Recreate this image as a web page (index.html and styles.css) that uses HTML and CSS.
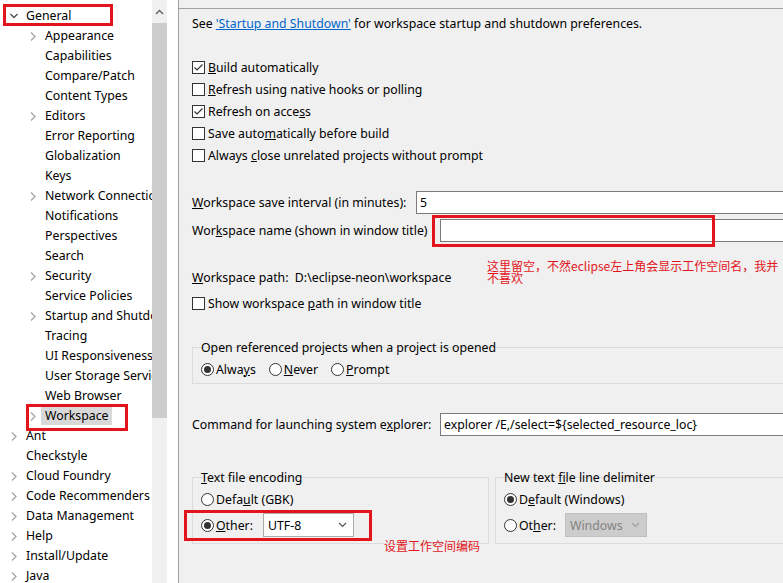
FILE: index.html
```html
<!DOCTYPE html>
<html lang="en">
<head>
    <meta charset="UTF-8">
    <title>Preferences - Workspace</title>
    <link rel="stylesheet" href="styles.css">
</head>
<body>
    <div class="window">
        <aside class="nav">
            <div class="tree">
                <div class="row lv0"><span class="tw open"><svg width="8" height="6" viewBox="0 0 8 6"><polyline points="0.5,1 4,4.5 7.5,1"/></svg></span><span class="lbl">General</span></div>
                <div class="row lv1"><span class="tw"><svg width="6" height="9" viewBox="0 0 6 9"><polyline points="1,0.5 5,4.5 1,8.5"/></svg></span><span class="lbl">Appearance</span></div>
                <div class="row lv1"><span class="tw"></span><span class="lbl">Capabilities</span></div>
                <div class="row lv1"><span class="tw"></span><span class="lbl">Compare/Patch</span></div>
                <div class="row lv1"><span class="tw"></span><span class="lbl">Content Types</span></div>
                <div class="row lv1"><span class="tw"><svg width="6" height="9" viewBox="0 0 6 9"><polyline points="1,0.5 5,4.5 1,8.5"/></svg></span><span class="lbl">Editors</span></div>
                <div class="row lv1"><span class="tw"></span><span class="lbl">Error Reporting</span></div>
                <div class="row lv1"><span class="tw"></span><span class="lbl">Globalization</span></div>
                <div class="row lv1"><span class="tw"></span><span class="lbl">Keys</span></div>
                <div class="row lv1"><span class="tw"><svg width="6" height="9" viewBox="0 0 6 9"><polyline points="1,0.5 5,4.5 1,8.5"/></svg></span><span class="lbl">Network Connections</span></div>
                <div class="row lv1"><span class="tw"></span><span class="lbl">Notifications</span></div>
                <div class="row lv1"><span class="tw"></span><span class="lbl">Perspectives</span></div>
                <div class="row lv1"><span class="tw"></span><span class="lbl">Search</span></div>
                <div class="row lv1"><span class="tw"><svg width="6" height="9" viewBox="0 0 6 9"><polyline points="1,0.5 5,4.5 1,8.5"/></svg></span><span class="lbl">Security</span></div>
                <div class="row lv1"><span class="tw"></span><span class="lbl">Service Policies</span></div>
                <div class="row lv1"><span class="tw"><svg width="6" height="9" viewBox="0 0 6 9"><polyline points="1,0.5 5,4.5 1,8.5"/></svg></span><span class="lbl">Startup and Shutdown</span></div>
                <div class="row lv1"><span class="tw"></span><span class="lbl">Tracing</span></div>
                <div class="row lv1"><span class="tw"></span><span class="lbl">UI Responsiveness Monitoring</span></div>
                <div class="row lv1"><span class="tw"></span><span class="lbl">User Storage Service</span></div>
                <div class="row lv1"><span class="tw"></span><span class="lbl">Web Browser</span></div>
                <div class="row lv1"><span class="tw"><svg width="6" height="9" viewBox="0 0 6 9"><polyline points="1,0.5 5,4.5 1,8.5"/></svg></span><span class="lbl selected">Workspace</span></div>
                <div class="row lv0"><span class="tw"><svg width="6" height="9" viewBox="0 0 6 9"><polyline points="1,0.5 5,4.5 1,8.5"/></svg></span><span class="lbl">Ant</span></div>
                <div class="row lv0"><span class="tw"></span><span class="lbl">Checkstyle</span></div>
                <div class="row lv0"><span class="tw"><svg width="6" height="9" viewBox="0 0 6 9"><polyline points="1,0.5 5,4.5 1,8.5"/></svg></span><span class="lbl">Cloud Foundry</span></div>
                <div class="row lv0"><span class="tw"><svg width="6" height="9" viewBox="0 0 6 9"><polyline points="1,0.5 5,4.5 1,8.5"/></svg></span><span class="lbl">Code Recommenders</span></div>
                <div class="row lv0"><span class="tw"><svg width="6" height="9" viewBox="0 0 6 9"><polyline points="1,0.5 5,4.5 1,8.5"/></svg></span><span class="lbl">Data Management</span></div>
                <div class="row lv0"><span class="tw"><svg width="6" height="9" viewBox="0 0 6 9"><polyline points="1,0.5 5,4.5 1,8.5"/></svg></span><span class="lbl">Help</span></div>
                <div class="row lv0"><span class="tw"><svg width="6" height="9" viewBox="0 0 6 9"><polyline points="1,0.5 5,4.5 1,8.5"/></svg></span><span class="lbl">Install/Update</span></div>
                <div class="row lv0"><span class="tw"><svg width="6" height="9" viewBox="0 0 6 9"><polyline points="1,0.5 5,4.5 1,8.5"/></svg></span><span class="lbl">Java</span></div>
            </div>
            <div class="vscroll">
                <div class="arrow"><svg width="9" height="6" viewBox="0 0 9 6"><polyline points="1,5 4.5,1.5 8,5"/></svg></div>
                <div class="thumb"></div>
            </div>
        </aside>

        <main class="page">
            <div class="page-top"></div>
            <p class="intro">See <a href="#">'Startup and Shutdown'</a> for workspace startup and shutdown preferences.</p>

            <div class="checks">
                <label class="check"><span class="box"><svg width="11" height="11" viewBox="0 0 11 11"><polyline points="1.5,5.5 4,8 9.5,2.5"/></svg></span><span><u>B</u>uild automatically</span></label>
                <label class="check"><span class="box"></span><span><u>R</u>efresh using native hooks or polling</span></label>
                <label class="check"><span class="box"><svg width="11" height="11" viewBox="0 0 11 11"><polyline points="1.5,5.5 4,8 9.5,2.5"/></svg></span><span>Refresh on acce<u>s</u>s</span></label>
                <label class="check"><span class="box"></span><span>Save auto<u>m</u>atically before build</span></label>
                <label class="check"><span class="box"></span><span>Always <u>c</u>lose unrelated projects without prompt</span></label>
            </div>

            <div class="field save">
                <span class="flabel"><u>W</u>orkspace save interval (in minutes):</span>
                <span class="input">5</span>
            </div>
            <div class="field name">
                <span class="flabel">Wor<u>k</u>space name (shown in window title)</span>
                <span class="input"></span>
            </div>

            <div class="path"><u>W</u>orkspace path:&nbsp; D:\eclipse-neon\workspace</div>
            <label class="check show-path"><span class="box"></span><span>Show workspace <u>p</u>ath in window title</span></label>

            <div class="group open-refs">
                <div class="glabel">Open referenced projects when a project is opened</div>
                <div class="radios">
                    <label class="radio"><span class="dot on"></span><span>Alwa<u>y</u>s</span></label>
                    <label class="radio"><span class="dot"></span><span><u>N</u>ever</span></label>
                    <label class="radio"><span class="dot"></span><span><u>P</u>rompt</span></label>
                </div>
            </div>

            <div class="field command">
                <span class="flabel">Command for launching system e<u>x</u>plorer:</span>
                <span class="input">explorer /E,/select=${selected_resource_loc}</span>
            </div>

            <div class="groups">
                <div class="group encoding">
                    <div class="glabel"><u>T</u>ext file encoding</div>
                    <label class="radio line"><span class="dot"></span><span>Defa<u>u</u>lt (GBK)</span></label>
                    <div class="radio line">
                        <span class="dot on"></span><span class="other"><u>O</u>ther:</span>
                        <span class="select">UTF-8<svg width="9" height="6" viewBox="0 0 9 6"><polyline points="1,1 4.5,4.5 8,1"/></svg></span>
                    </div>
                </div>
                <div class="group delimiter">
                    <div class="glabel">New text <u>f</u>ile line delimiter</div>
                    <label class="radio line"><span class="dot on"></span><span>D<u>e</u>fault (Windows)</span></label>
                    <div class="radio line">
                        <span class="dot"></span><span class="other">Ot<u>h</u>er:</span>
                        <span class="select disabled">Windows<svg width="9" height="6" viewBox="0 0 9 6"><polyline points="1,1 4.5,4.5 8,1"/></svg></span>
                    </div>
                </div>
            </div>
        </main>

        <div class="mark mark-general"></div>
        <div class="mark mark-workspace"></div>
        <div class="mark mark-name"></div>
        <div class="mark mark-other"></div>
        <div class="note note-name">这里留空，不然eclipse左上角会显示工作空间名，我并不喜欢</div>
        <div class="note note-encoding">设置工作空间编码</div>
    </div>
</body>
</html>
```

FILE: styles.css
```css
body {
    margin: 0;
    background: #f0f0f0;
    font-family: "Noto Sans", sans-serif;
    font-size: 12.3px;
    color: #000;
}
u {
    text-decoration: underline;
    text-underline-offset: 1px;
}
.window {
    position: relative;
    display: flex;
    height: 583px;
    overflow: hidden;
}

/* left tree */
.nav {
    flex: none;
    display: flex;
    width: 178px;
    background: #fff;
    border-right: 1px solid #a0a0a0;
}
.tree {
    width: 152px;
    padding-top: 6px;
    overflow: hidden;
}
.row {
    display: flex;
    align-items: center;
    height: 20px;
    white-space: nowrap;
}
.row.lv0 {
    padding-left: 8px;
}
.row.lv1 {
    padding-left: 27px;
}
.tw {
    flex: none;
    display: flex;
    align-items: center;
    width: 15px;
    height: 20px;
    padding-left: 3px;
}
.tw svg {
    fill: none;
    stroke: #a6a6a6;
    stroke-width: 1.3;
}
.tw.open {
    padding-left: 2px;
    width: 16px;
}
.tw.open svg {
    stroke: #4d4d4d;
}
.lbl {
    line-height: 20px;
}
.lbl.selected {
    background: #d9d9d9;
    margin-left: -4px;
    padding: 0 4px;
    line-height: 18px;
}
.vscroll {
    width: 15px;
    background: #f0f0f0;
}
.vscroll .arrow {
    display: flex;
    align-items: center;
    justify-content: center;
    height: 23px;
}
.vscroll .arrow svg {
    fill: none;
    stroke: #606060;
    stroke-width: 1.4;
}
.vscroll .thumb {
    height: 395px;
    background: #cdcdcd;
}

/* right page */
.page {
    flex: 1;
    padding-left: 13px;
    overflow: hidden;
}
.page-top {
    height: 8px;
    margin-left: -13px;
    border-bottom: 1px solid #a0a0a0;
}
.intro {
    margin: 5px 0 0;
    line-height: 20px;
    white-space: nowrap;
}
.intro a {
    color: #0066cc;
    text-decoration: underline;
}
.checks {
    margin-top: 22px;
}
.check {
    display: flex;
    align-items: center;
    height: 22px;
    white-space: nowrap;
}
.box {
    flex: none;
    display: flex;
    align-items: center;
    justify-content: center;
    box-sizing: border-box;
    width: 13px;
    height: 13px;
    margin-right: 3px;
    border: 1px solid #333;
    background: #fff;
}
.box svg {
    fill: none;
    stroke: #333;
    stroke-width: 1.2;
}
.field {
    display: flex;
    align-items: center;
    height: 23px;
    white-space: nowrap;
}
.field .flabel {
    flex: none;
}
.field.save {
    margin-top: 25px;
}
.field.save .flabel {
    width: 224px;
}
.field.name {
    margin-top: 5px;
}
.field.name .flabel,
.field.command .flabel {
    width: 248px;
}
.input {
    flex: 1;
    box-sizing: border-box;
    height: 23px;
    margin-right: -20px;
    padding: 0 3px;
    line-height: 21px;
    background: #fff;
    border: 1px solid #7a7a7a;
}
.path {
    margin-top: 25px;
    line-height: 22px;
    white-space: nowrap;
}
.show-path {
    margin-top: 3px;
}
.group {
    box-sizing: border-box;
    border: 1px solid #dcdcdc;
    padding: 0 8px;
}
.glabel {
    height: 20px;
    margin-top: -10px;
    line-height: 20px;
    white-space: nowrap;
}
.open-refs {
    margin-top: 33px;
    margin-right: -20px;
    padding-bottom: 3px;
}
.radios {
    display: flex;
    gap: 13px;
}
.radio {
    display: flex;
    align-items: center;
    height: 22px;
    white-space: nowrap;
}
.dot {
    flex: none;
    box-sizing: border-box;
    display: flex;
    align-items: center;
    justify-content: center;
    width: 13px;
    height: 13px;
    margin-right: 2px;
    border: 1px solid #333;
    border-radius: 50%;
    background: #fff;
}
.dot.on::after {
    content: "";
    width: 7px;
    height: 7px;
    border-radius: 50%;
    background: #333;
}
.field.command {
    margin-top: 29px;
}
.groups {
    display: flex;
    gap: 6px;
    margin-top: 41px;
}
.group.encoding {
    width: 297px;
    padding-bottom: 6px;
}
.group.delimiter {
    flex: 1;
    margin-right: -20px;
    padding-bottom: 6px;
}
.radio.line + .radio.line {
    height: 24px;
    margin-top: 3px;
}
.other {
    width: 47px;
}
.select {
    display: flex;
    align-items: center;
    justify-content: space-between;
    box-sizing: border-box;
    width: 91px;
    height: 24px;
    padding: 0 6px 0 4px;
    background: #fff;
    border: 1px solid #adadad;
}
.select svg {
    fill: none;
    stroke: #555;
    stroke-width: 1.2;
}
.select.disabled {
    width: 82px;
    margin-left: -1px;
    background: #cccccc;
    border-color: #bfbfbf;
    color: #838383;
}
.select.disabled svg {
    stroke: #a0a0a0;
}

/* annotations drawn on top of the screenshot */
.mark {
    position: absolute;
    box-sizing: border-box;
    border: 3px solid #e3141b;
}
.mark-general {
    left: 3px;
    top: 4px;
    width: 110px;
    height: 22px;
}
.mark-workspace {
    left: 26px;
    top: 404px;
    width: 102px;
    height: 27px;
}
.mark-name {
    left: 432px;
    top: 215px;
    width: 283px;
    height: 32px;
}
.mark-other {
    left: 184px;
    top: 510px;
    width: 188px;
    height: 31px;
}
.note {
    position: absolute;
    color: #e3141b;
    font-family: "Noto Sans CJK SC", sans-serif;
    font-size: 12px;
    line-height: 12px;
}
.note-name {
    left: 487px;
    top: 260px;
    width: 296px;
}
.note-encoding {
    left: 384px;
    top: 540px;
    white-space: nowrap;
}
```
